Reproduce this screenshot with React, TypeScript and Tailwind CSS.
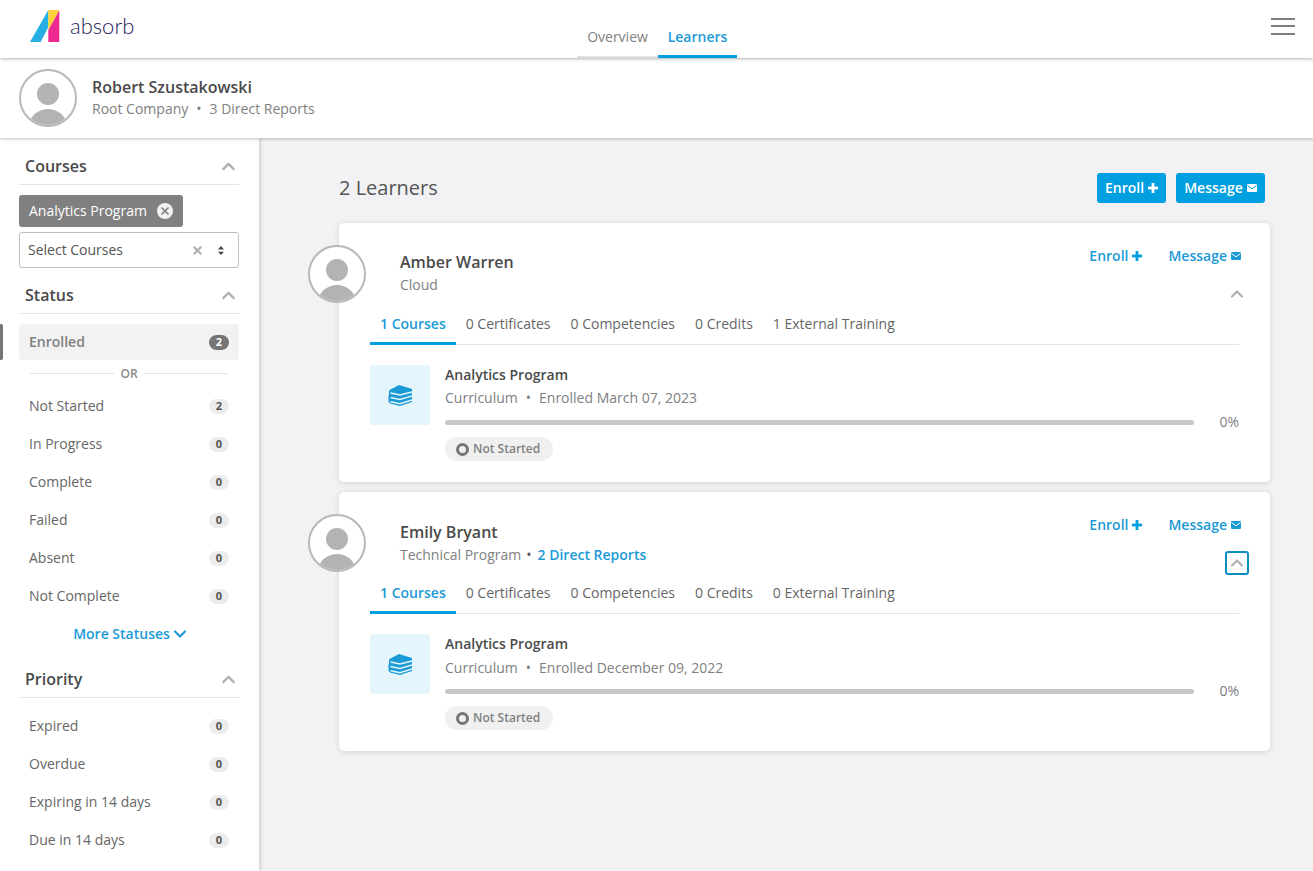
import React from 'react';
import { ChevronUp, ChevronDown, X } from 'lucide-react';

const UserAvatar = () => (
  <div className="w-[58px] h-[58px] shrink-0 rounded-full border-2 border-[#b8b8b8] bg-white overflow-hidden">
    <svg viewBox="0 0 54 54" className="w-full h-full">
      <circle cx="27" cy="23" r="11" fill="#b3b3b3" />
      <ellipse cx="27" cy="53" rx="18" ry="15" fill="#b3b3b3" />
    </svg>
  </div>
);

const Logo = () => (
  <div className="flex items-center gap-[10px]">
    <svg viewBox="0 0 30 32" className="w-[30px] h-[32px]">
      <polygon points="18.3,0 0,32 10.7,32 18.3,17" fill="#27aee4" />
      <polygon points="29.3,0 29.3,32 18.3,32 18.3,20" fill="#ee2a92" />
      <polygon points="18.3,0 29.3,0 18.3,20" fill="#fdd03b" />
    </svg>
    <span className="font-['Lato',sans-serif] font-light text-[22px] text-[#27225e] leading-none">absorb</span>
  </div>
);

const PlusIcon = ({ className }: { className: string }) => (
  <svg viewBox="0 0 10 10" className={className} fill="currentColor">
    <rect x="3.6" y="0" width="2.8" height="10" />
    <rect x="0" y="3.6" width="10" height="2.8" />
  </svg>
);

const MailIcon = ({ className, line }: { className: string; line: string }) => (
  <svg viewBox="0 0 10 8" className={className}>
    <rect x="0" y="0" width="10" height="8" rx="1" fill="currentColor" />
    <path d="M0.5 1.5 5 4.8 9.5 1.5" fill="none" stroke={line} strokeWidth="1" />
  </svg>
);

const Count = ({ n, active }: { n: number; active?: boolean }) => (
  <span className={`w-5 h-[15px] rounded-full flex items-center justify-center text-[11px] font-bold ${active ? 'bg-[#757575] text-white' : 'bg-[#ececec] text-[#555]'}`}>
    {n}
  </span>
);

const FilterRow = ({ label, n }: { label: string; n: number }) => (
  <div className="h-[38px] pl-[10px] pr-[10px] flex items-center justify-between text-[14px] text-[#666]">
    <span className="mb-[2px]">{label}</span>
    <Count n={n} />
  </div>
);

const SectionHead = ({ title }: { title: string }) => (
  <div className="h-[37px] pl-[6px] border-b border-[#e3e3e3] flex items-center justify-between">
    <span className="text-[16px] font-semibold text-[#4a4a4a]">{title}</span>
    <ChevronUp className="w-[21px] h-[21px] text-[#b0b0b0]" strokeWidth={2.6} />
  </div>
);

const Sidebar = () => (
  <aside className="relative w-[259px] shrink-0 h-[733px] overflow-hidden bg-white pl-[19px] pr-[20px] pt-[10px] shadow-[1px_0_4px_rgba(0,0,0,0.18)]">
    <SectionHead title="Courses" />
    <div className="mt-[10px] w-[164px] h-[32px] rounded-[3px] bg-[#808080] pl-[10px] pr-[10px] flex items-center justify-between text-[14px] text-white">
      <span className="mb-[2px]">Analytics Program</span>
      <span className="w-4 h-4 rounded-full bg-[#f2f2f2] flex items-center justify-center">
        <X className="w-3 h-3 text-[#808080]" strokeWidth={3.5} />
      </span>
    </div>
    <div className="mt-[5px] h-[36px] rounded-[3px] border border-[#bdbdbd] pl-2 pr-[14px] flex items-center text-[14px] text-[#555]">
      <span className="flex-1 mb-[2px]">Select Courses</span>
      <X className="w-[13px] h-[13px] text-[#aaa] mr-[14px]" strokeWidth={3.5} />
      <svg viewBox="0 0 8 12" className="w-[6px] h-[9px]">
        <polygon points="4,0 8,4.5 0,4.5" fill="#444" />
        <polygon points="4,12 8,7.5 0,7.5" fill="#444" />
      </svg>
    </div>
    <div className="mt-[9px]">
      <SectionHead title="Status" />
    </div>
    <div className="mt-[10px] relative h-[36px] rounded-[3px] bg-[#f2f2f2] pl-[10px] pr-[10px] flex items-center justify-between text-[14px] font-semibold text-[#808080]">
      <span className="absolute left-[-19px] top-0 w-[3px] h-[36px] rounded-r-[2px] bg-[#757575]" />
      <span className="mb-[2px]">Enrolled</span>
      <Count n={2} active />
    </div>
    <div className="h-[27px] px-[11px] flex items-center gap-[6px] text-[12px] font-semibold text-[#888]">
      <div className="flex-1 h-px bg-[#e3e3e3]" />
      <span>OR</span>
      <div className="flex-1 h-px bg-[#e3e3e3]" />
    </div>
    <FilterRow label="Not Started" n={2} />
    <FilterRow label="In Progress" n={0} />
    <FilterRow label="Complete" n={0} />
    <FilterRow label="Failed" n={0} />
    <FilterRow label="Absent" n={0} />
    <FilterRow label="Not Complete" n={0} />
    <div className="h-[38px] flex items-center justify-center text-[14px] font-semibold text-[#1b9ad6]">
      <span className="mb-[2px]">More Statuses</span>
      <ChevronDown className="w-[20px] h-[20px] mr-[-5px]" strokeWidth={2.6} />
    </div>
    <div className="mt-[8px]">
      <SectionHead title="Priority" />
    </div>
    <div className="mt-[9px]">
      <FilterRow label="Expired" n={0} />
      <FilterRow label="Overdue" n={0} />
      <FilterRow label="Expiring in 14 days" n={0} />
      <FilterRow label="Due in 14 days" n={0} />
    </div>
  </aside>
);

const BooksIcon = () => (
  <svg viewBox="0 0 24 21" className="w-6 h-[21px]">
    <path d="M1.5 5 11 0 24 4V17L12 21 2 18.5Q0 17 0.5 14 0 11 1 9.5 0.5 7 1.5 5Z" fill="#1b9ad6" />
    <g fill="none" stroke="#e5f5fc" strokeWidth="1.5">
      <path d="M24 7 12 10 2.5 8" />
      <path d="M24 11 12 14.5 2.5 12.5" />
      <path d="M24 15 12 18.8 2.5 16.8" />
    </g>
  </svg>
);

const Learner = ({ name, org, reports, date, external, focused }: {
  name: string;
  org: string;
  reports?: string;
  date: string;
  external: number;
  focused?: boolean;
}) => (
  <div className="h-[259px] rounded-[5px] bg-white pl-[31px] pr-[31px] shadow-[0_1px_6px_rgba(0,0,0,0.13)]">
    <div className="h-[91px] flex">
      <div className="ml-[-62px] mt-[22px]">
        <UserAvatar />
      </div>
      <div className={`ml-[34px] flex-1 ${focused ? 'mt-[28px]' : 'mt-[27px]'}`}>
        <div className="text-[16px] font-semibold text-[#4a4a4a] leading-[24px]">{name}</div>
        <div className="mt-[1px] text-[14px] text-[#808080] leading-[19px]">
          {org}
          {reports && (
            <>
              <span className="ml-[5px] mr-[6px] text-[#555]">•</span>
              <span className="font-semibold text-[#1b9ad6]">{reports}</span>
            </>
          )}
        </div>
      </div>
      <div className="flex flex-col items-end">
        <div className="mt-[23px] flex items-center text-[14px] font-semibold text-[#1b9ad6] leading-[20px]">
          <span>Enroll</span>
          <PlusIcon className="w-[10px] h-[10px] ml-1 text-[#009fdf]" />
          <span className="ml-[26px]">Message</span>
          <MailIcon className="w-[10px] h-2 ml-1 mr-[-2px] text-[#1b9ad6]" line="#ffffff" />
        </div>
        <div className={`w-6 h-6 mt-[16px] mr-[-10px] rounded-[3px] flex items-center justify-center ${focused ? 'border-2 border-[#0b8fc2]' : ''}`}>
          <ChevronUp className="w-5 h-5 shrink-0 text-[#b0b0b0]" strokeWidth={2.6} />
        </div>
      </div>
    </div>
    <div className="h-[31px] border-b border-[#e3e3e3] flex text-[14px] leading-[19px] text-[#666]">
      <div className="h-[31px] px-[10px] border-b-[3px] border-[#009fdf] font-semibold text-[#1b9ad6]">1 Courses</div>
      <div className="px-[10px]">0 Certificates</div>
      <div className="px-[10px]">0 Competencies</div>
      <div className="px-[10px]">0 Credits</div>
      <div className="px-[10px]">{external} External Training</div>
    </div>
    <div className="mt-[20px] flex">
      <div className="w-[60px] h-[60px] rounded-[3px] bg-[#e5f5fc] flex items-center justify-center">
        <BooksIcon />
      </div>
      <div className="ml-[15px] flex-1">
        <div className="text-[14px] font-semibold text-[#4a4a4a] leading-[20px]">Analytics Program</div>
        <div className={`text-[14px] text-[#808080] leading-[20px] ${focused ? 'mt-[4px]' : 'mt-[3px]'}`}>
          Curriculum<span className="mx-[8px]">•</span>Enrolled {date}
        </div>
        <div className={`flex items-center ${focused ? 'mt-[3px]' : 'mt-[4px]'}`}>
          <div className="flex-1 h-[5px] rounded-full bg-[#c8c8c8]" />
          <span className="w-[45px] text-right text-[14px] text-[#808080] leading-[20px]">0%</span>
        </div>
        <div className="mt-[5px] w-[108px] h-[24px] rounded-full bg-[#f0f0f0] pl-[11px] flex items-center gap-1 text-[12px] font-semibold text-[#808080]">
          <span className="w-[13px] h-[13px] rounded-full border-[3px] border-[#757575]" />
          Not Started
        </div>
      </div>
    </div>
  </div>
);

const App = () => {
  return (
    <div className="w-[1313px] h-[871px] overflow-hidden bg-[#f2f2f4] font-['Open_Sans',sans-serif]">
      <header className="relative z-20 h-[58px] bg-white pl-[30px] pr-[18px] pb-[6px] flex items-center justify-between shadow-[0_1px_3px_rgba(0,0,0,0.3)]">
        <Logo />
        <nav className="absolute left-[577px] bottom-0 flex text-[14px] h-[58px] items-end">
          <div className="h-[32px] w-[81px] text-center border-b-[2px] border-[#e0e0e0] text-[#808080]">Overview</div>
          <div className="h-[32px] w-[79px] text-center border-b-[3px] border-[#009fdf] font-semibold text-[#1b9ad6]">Learners</div>
        </nav>
        <div className="w-6 flex flex-col gap-[5.5px]">
          <div className="h-[2px] bg-[#808080]" />
          <div className="h-[2px] bg-[#808080]" />
          <div className="h-[2px] bg-[#808080]" />
        </div>
      </header>
      <div className="relative z-10 h-[80px] bg-white pl-[19px] flex items-center shadow-[0_1px_3px_rgba(0,0,0,0.25)]">
        <UserAvatar />
        <div className="ml-[15px] mb-[2px]">
          <div className="text-[16px] font-semibold text-[#4a4a4a] leading-[22px]">Robert Szustakowski</div>
          <div className="mt-[1px] text-[14px] text-[#808080] leading-[20px]">
            Root Company<span className="mx-2">•</span>3 Direct Reports
          </div>
        </div>
      </div>
      <div className="flex">
        <Sidebar />
        <main className="ml-[80px]">
          <div className="mt-[35px] w-[926px] h-[30px] flex items-center justify-between">
            <h1 className="text-[20px] text-[#555]">2 Learners</h1>
            <div className="flex gap-[10px] text-[14px] font-semibold text-white">
              <div className="h-[30px] w-[69px] rounded-[3px] bg-[#009fdf] flex items-center justify-center gap-1">
                <span className="mb-[2px]">Enroll</span>
                <PlusIcon className="w-[10px] h-[10px]" />
              </div>
              <div className="h-[30px] w-[89px] rounded-[3px] bg-[#009fdf] flex items-center justify-center gap-1">
                <span className="mb-[2px]">Message</span>
                <MailIcon className="w-[10px] h-2" line="#009fdf" />
              </div>
            </div>
          </div>
          <div className="mt-[20px] w-[931px] flex flex-col gap-[10px]">
            <Learner name="Amber Warren" org="Cloud" date="March 07, 2023" external={1} />
            <Learner name="Emily Bryant" org="Technical Program" reports="2 Direct Reports" date="December 09, 2022" external={0} focused />
          </div>
        </main>
      </div>
    </div>
  );
};

export default App;
